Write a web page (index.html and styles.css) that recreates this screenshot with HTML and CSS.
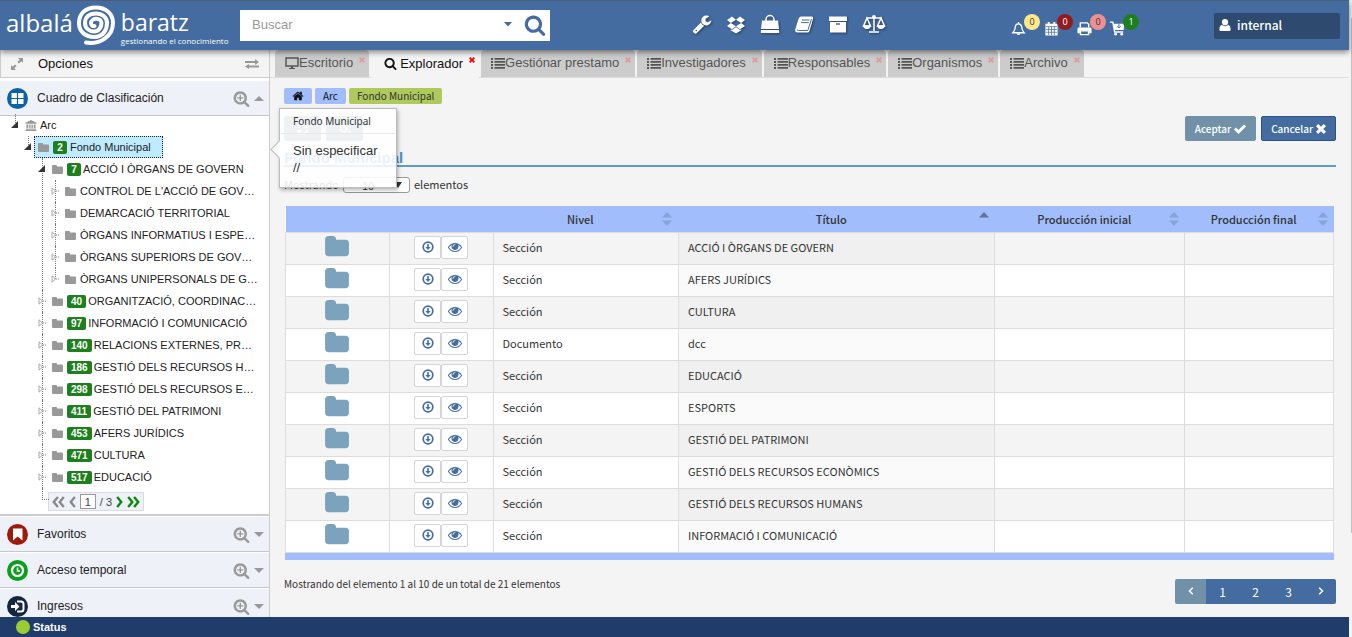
FILE: index.html
```html
<!DOCTYPE html>
<html lang="es">
<head>
<meta charset="utf-8">
<title>albalá baratz - Explorador</title>
<link rel="stylesheet" href="styles.css">
</head>
<body>
<svg class="defs" aria-hidden="true">
  <symbol id="folder" viewBox="0 128 1792 1536"><path d="M1728 608v704q0 92-66 158t-158 66h-1216q-92 0-158-66t-66-158v-960q0-92 66-158t158-66h320q92 0 158 66t66 158v32h672q92 0 158 66t66 158z"/></symbol>
  <symbol id="folder-sm" viewBox="0 0 12 10"><path d="M0 1.2Q0 .4 .8 .4H4.2Q5 .4 5 1.2V2H10.200Q11 2 11 2.800V8.600Q11 9.400 10.200 9.400H.8Q0 9.400 0 8.600Z"/></symbol>
  <symbol id="search" viewBox="0 0 1792 1792"><path d="M1216 832q0-185-131.500-316.500t-316.500-131.500-316.500 131.500-131.500 316.500 131.500 316.500 316.500 131.500 316.500-131.500 131.500-316.500zm512 832q0 52-38 90t-90 38q-54 0-90-38l-343-342q-179 124-399 124-143 0-273.500-55.500t-225-150-150-225-55.500-273.500 55.500-273.500 150-225 225-150 273.500-55.500 273.500 55.500 225 150 150 225 55.500 273.500q0 220-124 399l343 343q37 37 37 90z"/></symbol>
  <symbol id="search-plus" viewBox="0 0 1792 1792"><use href="#search"/><path d="M1088 760v144h-248v248h-144v-248h-248v-144h248v-248h144v248z"/></symbol>
  <symbol id="eye" viewBox="0 0 1792 1792"><path d="M1664 960q-152-236-381-353 61 104 61 225 0 185-131.500 316.500t-316.500 131.500-316.500-131.500-131.500-316.500q0-121 61-225-229 117-381 353 133 205 333.500 326.500t434.500 121.500 434.500-121.500 333.500-326.500zm-720-384q0-20-14-34t-34-14q-125 0-214.500 89.500t-89.500 214.500q0 20 14 34t34 14 34-14 14-34q0-86 61-147t147-61q20 0 34-14t14-34zm848 384q0 34-20 69-140 230-376.500 368.500t-499.500 138.500-499.500-139-376.500-368q-20-35-20-69t20-69q140-229 376.500-368t499.500-139 499.500 139 376.500 368q20 35 20 69z"/></symbol>
  <symbol id="down" viewBox="0 0 12 12"><circle cx="6" cy="6" r="4.800" fill="none" stroke="currentColor" stroke-width="1.700"/><path d="M5.200 3H6.800V6H8.600L6 8.900 3.400 6H5.200Z"/></symbol>
  <symbol id="home" viewBox="0 128 1792 1536"><path d="M1472 992v480q0 26-19 45t-45 19h-384v-384h-256v384h-384q-26 0-45-19t-19-45v-480q0-1 .5-3t.5-3l575-474 575 474q1 2 1 6zm223-69l-62 74q-8 9-21 11h-3q-13 0-21-7l-692-577-692 577q-12 8-24 7-13-2-21-11l-62-74q-8-10-7-23.500t11-21.500l719-599q32-26 76-26t76 26l244 204v-195q0-14 9-23t23-9h192q14 0 23 9t9 23v408l219 182q10 8 11 21.500t-7 23.500z"/></symbol>
  <symbol id="list" viewBox="0 0 14 12"><path d="M0 1h2v2H0zM0 4h2v2H0zM0 7h2v2H0zM0 10h2v2H0zM3.500 1H14v1.800H3.500zM3.500 4H14v1.800H3.500zM3.500 7H14v1.800H3.500zM3.500 10H14v1.800H3.500z"/></symbol>
  <symbol id="x" viewBox="0 0 10 10"><path d="M0 2.200 2.200 0 5 2.800 7.800 0 10 2.200 7.200 5 10 7.800 7.800 10 5 7.200 2.200 10 0 7.800 2.800 5Z"/></symbol>
  <symbol id="sort" viewBox="0 0 10 14"><path d="M5 0 10 5.500H0ZM5 14 0 8.500H10Z"/></symbol>
  <symbol id="opened" viewBox="0 0 8 8"><path d="M7 0V7H0Z"/></symbol>
  <symbol id="closed" viewBox="0 0 8 8"><path d="M1 .8 4.500 4 1 7.200Z" fill="#fff" stroke="#aaa"/><path d="M5 4h3" stroke="#888" stroke-dasharray="1 1"/></symbol>
</svg>

<header class="topbar">
  <a class="logo" href="#" aria-label="albalá baratz">
    <span class="logo-word">albalá</span>
    <svg class="logo-mark" viewBox="0 0 40 40"><path d="M10 37.500C23 40 37 32 37 18C37 8 29 2.500 20 2.500C9 2.500 3 9 3 18C3 27 10 32 18 32C27 32 31 25 31 18C31 12 26 8.500 20 8.500C13 8.500 9 12 9 18C9 23 13 26.500 18 26.500C23 26.500 25.500 22 25.500 18C25.500 15.500 23 13.800 20 13.800C17 13.800 15 16 15 18C15 20 16.500 21.500 18.500 21" fill="none" stroke="#fff" stroke-width="4" stroke-linecap="round"/></svg>
    <span class="logo-side"><span class="logo-word">baratz</span><span class="tagline">gestionando el conocimiento</span></span>
  </a>
  <form class="search">
    <input type="text" placeholder="Buscar" aria-label="Buscar">
    <button type="button" class="plain" aria-label="Opciones de búsqueda"><svg class="caret" viewBox="0 0 8 5"><path d="M0 0H8L4 4.500Z"/></svg></button>
    <button type="button" class="plain" aria-label="Buscar"><svg class="i22"><use href="#search"/></svg></button>
  </form>
  <nav class="tools" aria-label="Herramientas">
    <a href="#" aria-label="Ajustes"><svg viewBox="0 0 1792 1792"><path d="M448 1472q0-26-19-45t-45-19-45 19-19 45 19 45 45 19 45-19 19-45zm644-420l-682 682q-37 37-90 37-52 0-91-37l-106-108q-38-36-38-90 0-53 38-91l681-681q39 98 114.500 173.500t173.500 114.500zm634-435q0 39-23 106-47 134-164.500 217.500t-258.500 83.500q-185 0-316.500-131.500t-131.500-316.500 131.500-316.500 316.500-131.500q58 0 121.500 16.500t107.500 46.500q16 11 16 28t-16 28l-293 169v224l193 107q5-3 79-48.500t135.500-81 70.500-35.500q15 0 23.500 10t8.500 25z"/></svg></a>
    <a href="#" aria-label="Depósito"><svg viewBox="0 0 20 20"><path d="M6 2.500 10 5.800 4.800 9 1 6ZM14 2.500 19 6 15.200 9 10 5.800ZM1 12 4.800 9 10 12.200 6 15.200ZM19 12 15.200 9 10 12.200 14 15.200ZM10 13 14 16 15.300 15.300V16.300L10 19.500 4.700 16.300V15.300L6 16Z"/></svg></a>
    <a href="#" aria-label="Préstamos"><svg viewBox="0 0 20 20"><path d="M6 9V5.500a4 4 0 0 1 8 0V9" fill="none" stroke="#fff" stroke-width="1.500"/><path d="M2 6.500H18L19 15H1ZM1 16H19L19.200 19H.8Z"/></svg></a>
    <a href="#" aria-label="Publicaciones"><svg viewBox="0 0 20 20"><path d="M7 2.500H18Q19.500 3 19 5L15.500 17Q15 18.500 13.500 18.500H3Q.5 18 1.300 15L4.500 5Q5.200 2.500 7 2.500Z"/><path d="M8 6H15.500M7.200 8.600H14.700M3 15.500Q3 16.500 4.500 16.500H13.800L17.500 5" fill="none" stroke="#446ca0"/></svg></a>
    <a href="#" aria-label="Archivo"><svg viewBox="0 0 20 20"><path d="M1 2.500H19V7H1ZM2 8H18V18.500H2Z"/><path d="M8 10H12" stroke="#446ca0" stroke-width="1.500"/></svg></a>
    <a href="#" aria-label="Comparar"><svg class="wide" viewBox="0 0 24 20"><path d="M4 4H20M12 2V17M7 18H17M5 4 1.500 12H8.500ZM19 4 15.500 12H22.500Z" fill="none" stroke="#fff" stroke-width="1.500"/><path d="M1 11.500H9Q8.500 15 5 15T1 11.500ZM15 11.500H23Q22.500 15 19 15T15 11.500Z"/><circle cx="12" cy="3" r="2"/></svg></a>
  </nav>
  <nav class="alerts" aria-label="Avisos">
    <a href="#" aria-label="Notificaciones"><svg viewBox="0 0 16 16"><path d="M2 12.500Q4.500 10 4.500 6.500Q5 3 8 3T11.500 6.500Q11.500 10 14 12.500Z" fill="none" stroke="#fff" stroke-width="1.400"/><path d="M7.200 1h1.600v2H7.200zM6 13H10Q9.500 15 8 15T6 13Z"/></svg><span class="count yellow">0</span></a>
    <a href="#" aria-label="Calendario"><svg viewBox="0 0 16 16"><path d="M1.500 3h13v12.500h-13zM4 1h2v3H4zM10 1h2v3h-2z"/><path d="M2 6h12M2 9h12M2 12h12M5 6v9M8 6v9M11 6v9" stroke="#446ca0" stroke-width=".8"/></svg><span class="count red">0</span></a>
    <a href="#" aria-label="Impresiones"><svg viewBox="0 0 16 16"><path d="M3.500 7V2H11L12.500 3.500V7" fill="none" stroke="#fff" stroke-width="1.500"/><path d="M2 7H14Q15.500 7 15.500 8.500V13H13V10.500H3V13H.5V8.500Q.5 7 2 7Z"/><path d="M3.700 10.500h8.600v4H3.700z" fill="none" stroke="#fff" stroke-width="1.500"/></svg><span class="count pink">0</span></a>
    <a href="#" aria-label="Cesta"><svg viewBox="0 0 16 16"><path d="M0 1.200H3L5 11.800H14" fill="none" stroke="#fff" stroke-width="1.500"/><path d="M3.500 3H15.500L14.500 9.500H5Z"/><circle cx="6" cy="14" r="1.500"/><circle cx="12.500" cy="14" r="1.500"/><path d="M9.500 3V7M7.500 5.500 9.500 7.500 11.500 5.500" fill="none" stroke="#446ca0"/></svg><span class="count green">1</span></a>
  </nav>
  <button type="button" class="user"><svg viewBox="0 0 12 12"><circle cx="6" cy="3.200" r="3.100"/><path d="M2.500 5.800Q6 8.500 9.500 5.800Q11.700 7 11.700 10.500Q11.500 12 10 12H2Q.5 12 .3 10.500Q.3 7 2.500 5.800Z"/></svg>internal</button>
</header>

<div class="main">
  <aside class="sidebar">
    <div class="options">
      <svg class="i12" viewBox="0 0 12 12"><path d="M7 0H12V5L10.300 3.300 8 5.600 6.400 4 8.700 1.700ZM5 12H0V7L1.700 8.700 4 6.400 5.600 8 3.300 10.300Z"/></svg>
      <span class="grow">Opciones</span>
      <svg class="swap" viewBox="0 0 14 10"><path d="M0 2H10V0L14 3 10 6V4H0ZM14 6.500H4V5L0 7.500 4 10V8.500H14Z"/></svg>
    </div>
    <div class="section">
      <svg class="disc" viewBox="0 0 21 21"><circle cx="10.500" cy="10.500" r="10.500" fill="#0b62a8"/><path d="M4.500 5h12v11h-12z" fill="#fff"/><path d="M10.500 5v11M4 10.500h13" stroke="#0b62a8" stroke-width="1.200"/></svg>
      <span class="grow">Cuadro de Clasificación</span>
      <svg class="i17"><use href="#search-plus"/></svg><svg class="tri" viewBox="0 0 10 5"><path d="M0 5 5 0 10 5Z"/></svg>
    </div>
    <ul class="tree">
      <li><div class="row"><svg class="exp"><use href="#opened"/></svg><a href="#"><svg class="ic" viewBox="0 0 12 12"><path d="M6 0 12 3V4H0V3ZM1 5H3V9H1ZM4 5H5.500V9H4ZM6.500 5H8V9H6.500ZM9 5H11V9H9ZM.5 9.500h11v1H.5zM0 11h12v1H0z"/></svg>Arc</a></div>
        <ul>
          <li><div class="row"><svg class="exp"><use href="#opened"/></svg><a href="#" class="selected"><svg class="ic"><use href="#folder-sm"/></svg><b>2</b>Fondo Municipal</a></div>
            <ul>
              <li><div class="row"><svg class="exp"><use href="#opened"/></svg><a href="#"><svg class="ic"><use href="#folder-sm"/></svg><b>7</b>ACCIÓ I ÒRGANS DE GOVERN</a></div>
                <ul>
                  <li><div class="row"><svg class="exp"><use href="#closed"/></svg><a href="#"><svg class="ic"><use href="#folder-sm"/></svg>CONTROL DE L'ACCIÓ DE GOV…</a></div></li>
                  <li><div class="row"><svg class="exp"><use href="#closed"/></svg><a href="#"><svg class="ic"><use href="#folder-sm"/></svg>DEMARCACIÓ TERRITORIAL</a></div></li>
                  <li><div class="row"><svg class="exp"><use href="#closed"/></svg><a href="#"><svg class="ic"><use href="#folder-sm"/></svg>ÒRGANS INFORMATIUS I ESPE…</a></div></li>
                  <li><div class="row"><svg class="exp"><use href="#closed"/></svg><a href="#"><svg class="ic"><use href="#folder-sm"/></svg>ÒRGANS SUPERIORS DE GOV…</a></div></li>
                  <li><div class="row"><svg class="exp"><use href="#closed"/></svg><a href="#"><svg class="ic"><use href="#folder-sm"/></svg>ÒRGANS UNIPERSONALS DE G…</a></div></li>
                </ul>
              </li>
              <li><div class="row"><svg class="exp"><use href="#closed"/></svg><a href="#"><svg class="ic"><use href="#folder-sm"/></svg><b>40</b>ORGANITZACIÓ, COORDINAC…</a></div></li>
              <li><div class="row"><svg class="exp"><use href="#closed"/></svg><a href="#"><svg class="ic"><use href="#folder-sm"/></svg><b>97</b>INFORMACIÓ I COMUNICACIÓ</a></div></li>
              <li><div class="row"><svg class="exp"><use href="#closed"/></svg><a href="#"><svg class="ic"><use href="#folder-sm"/></svg><b>140</b>RELACIONS EXTERNES, PR…</a></div></li>
              <li><div class="row"><svg class="exp"><use href="#closed"/></svg><a href="#"><svg class="ic"><use href="#folder-sm"/></svg><b>186</b>GESTIÓ DELS RECURSOS H…</a></div></li>
              <li><div class="row"><svg class="exp"><use href="#closed"/></svg><a href="#"><svg class="ic"><use href="#folder-sm"/></svg><b>298</b>GESTIÓ DELS RECURSOS E…</a></div></li>
              <li><div class="row"><svg class="exp"><use href="#closed"/></svg><a href="#"><svg class="ic"><use href="#folder-sm"/></svg><b>411</b>GESTIÓ DEL PATRIMONI</a></div></li>
              <li><div class="row"><svg class="exp"><use href="#closed"/></svg><a href="#"><svg class="ic"><use href="#folder-sm"/></svg><b>453</b>AFERS JURÍDICS</a></div></li>
              <li><div class="row"><svg class="exp"><use href="#closed"/></svg><a href="#"><svg class="ic"><use href="#folder-sm"/></svg><b>471</b>CULTURA</a></div></li>
              <li><div class="row"><svg class="exp"><use href="#closed"/></svg><a href="#"><svg class="ic"><use href="#folder-sm"/></svg><b>517</b>EDUCACIÓ</a></div></li>
              <li class="pager-item"><div class="tree-pager">
                <button type="button" class="plain" aria-label="Primera"><svg class="i11" viewBox="0 0 11 10"><path d="M5 .8 1.500 5 5 9.200M10 .8 6.500 5 10 9.200"/></svg></button>
                <button type="button" class="plain" aria-label="Anterior"><svg class="i6" viewBox="0 0 6 10"><path d="M5 .8 1.500 5 5 9.200"/></svg></button>
                <input type="text" value="1" aria-label="Página"><span>/ 3</span>
                <button type="button" class="plain go" aria-label="Siguiente"><svg class="i6" viewBox="0 0 6 10"><path d="M1 .8 4.500 5 1 9.200"/></svg></button>
                <button type="button" class="plain go" aria-label="Última"><svg class="i11" viewBox="0 0 11 10"><path d="M1 .8 4.500 5 1 9.200M6 .8 9.500 5 6 9.200"/></svg></button>
              </div></li>
            </ul>
          </li>
        </ul>
      </li>
    </ul>
    <div class="section">
      <svg class="disc" viewBox="0 0 21 21"><circle cx="10.500" cy="10.500" r="10.500" fill="#9c1b0c"/><path d="M6 4.500H15.500V16.500L10.700 12.500 6 16.500Z" fill="#fff"/></svg>
      <span class="grow">Favoritos</span>
      <svg class="i17"><use href="#search-plus"/></svg><svg class="tri" viewBox="0 0 10 5"><path d="M0 0 5 5 10 0Z"/></svg>
    </div>
    <div class="section">
      <svg class="disc" viewBox="0 0 21 21"><circle cx="10.500" cy="10.500" r="10.500" fill="#0aa01e"/><circle cx="10.500" cy="10.500" r="5.500" fill="none" stroke="#fff" stroke-width="2.200"/><path d="M10.500 7.500V11H13" fill="none" stroke="#fff" stroke-width="1.500"/></svg>
      <span class="grow">Acceso temporal</span>
      <svg class="i17"><use href="#search-plus"/></svg><svg class="tri" viewBox="0 0 10 5"><path d="M0 0 5 5 10 0Z"/></svg>
    </div>
    <div class="section">
      <svg class="disc" viewBox="0 0 21 21"><circle cx="10.500" cy="10.500" r="10.500" fill="#14273f"/><path d="M10 5.500H14Q16.500 5.500 16.500 8V13Q16.500 15.500 14 15.500H10" fill="none" stroke="#fff" stroke-width="2"/><path d="M4 9H8V6L12.500 10.500 8 15V12H4Z" fill="#fff"/></svg>
      <span class="grow">Ingresos</span>
      <svg class="i17"><use href="#search-plus"/></svg><svg class="tri" viewBox="0 0 10 5"><path d="M0 0 5 5 10 0Z"/></svg>
    </div>
  </aside>

  <main class="content">
    <nav class="tabs">
      <a href="#"><svg class="monitor" viewBox="0 0 14 12"><path d="M1 1h12v8H1z" fill="none" stroke="currentColor" stroke-width="1.500"/><path d="M6 9h2v2h2v1H4v-1h2z"/></svg>Escritorio<svg class="close"><use href="#x"/></svg></a>
      <a href="#" class="active"><svg class="i13"><use href="#search"/></svg>Explorador<svg class="close"><use href="#x"/></svg></a>
      <a href="#"><svg class="list"><use href="#list"/></svg>Gestiónar prestamo<svg class="close"><use href="#x"/></svg></a>
      <a href="#"><svg class="list"><use href="#list"/></svg>Investigadores<svg class="close"><use href="#x"/></svg></a>
      <a href="#"><svg class="list"><use href="#list"/></svg>Responsables<svg class="close"><use href="#x"/></svg></a>
      <a href="#"><svg class="list"><use href="#list"/></svg>Organismos<svg class="close"><use href="#x"/></svg></a>
      <a href="#"><svg class="list"><use href="#list"/></svg>Archivo<svg class="close"><use href="#x"/></svg></a>
    </nav>

    <div class="panel">
      <nav class="crumbs"><a href="#" aria-label="Inicio"><svg class="i12"><use href="#home"/></svg></a><a href="#">Arc</a><a href="#" class="current">Fondo Municipal</a></nav>
      <div class="toolbar">
        <button type="button" class="tool" aria-label="Actualizar"><svg class="i12" viewBox="0 0 12 12"><path d="M1.500 5A4.600 4.600 0 0 1 9.500 3M10.500 7A4.600 4.600 0 0 1 2.500 9" fill="none" stroke="currentColor" stroke-width="1.800"/><path d="M11.500 .5V5H7ZM.5 11.500V7H5Z"/></svg></button>
        <button type="button" class="tool" aria-label="Configurar"><svg class="i12" viewBox="0 0 12 12"><circle cx="4.500" cy="6" r="3" fill="none" stroke="currentColor" stroke-width="2" stroke-dasharray="1.800 .6"/><circle cx="10" cy="2.500" r="1.300" fill="none" stroke="currentColor"/><circle cx="10" cy="9.500" r="1.300" fill="none" stroke="currentColor"/></svg></button>
        <button type="button" class="accept">Aceptar <svg class="i12" viewBox="0 0 12 12"><path d="M0 6.500 2 4.500 4.500 7 10 1.500 12 3.500 4.500 11Z"/></svg></button>
        <button type="button" class="cancel">Cancelar <svg class="i10"><use href="#x"/></svg></button>
      </div>
      <h2>Fondo Municipal</h2>
      <div class="length"><label for="len">Mostrando</label><span class="pick"><select id="len"><option>10</option></select><svg viewBox="0 0 8 6"><path d="M0 0H8L4 6Z"/></svg></span><span>elementos</span></div>

      <div class="grid">
      <table>
        <colgroup><col class="c1"><col class="c1"><col class="c2"><col class="c3"><col class="c4"><col class="c5"></colgroup>
        <thead><tr><th></th><th></th>
          <th><div class="head"><span>Nivel</span><svg class="sort"><use href="#sort"/></svg></div></th>
          <th><div class="head"><span>Título</span><svg class="sort on" viewBox="0 0 10 14"><path d="M5 0 10 5.500H0Z"/></svg></div></th>
          <th><div class="head"><span>Producción inicial</span><svg class="sort"><use href="#sort"/></svg></div></th>
          <th><div class="head"><span>Producción final</span><svg class="sort"><use href="#sort"/></svg></div></th></tr></thead>
        <tbody>
          <tr><td><svg class="big"><use href="#folder"/></svg></td><td><div class="pair"><button type="button" aria-label="Abrir"><svg class="i12"><use href="#down"/></svg></button><button type="button" aria-label="Ver"><svg class="i14"><use href="#eye"/></svg></button></div></td><td>Sección</td><td>ACCIÓ I ÒRGANS DE GOVERN</td><td></td><td></td></tr>
          <tr><td><svg class="big"><use href="#folder"/></svg></td><td><div class="pair"><button type="button" aria-label="Abrir"><svg class="i12"><use href="#down"/></svg></button><button type="button" aria-label="Ver"><svg class="i14"><use href="#eye"/></svg></button></div></td><td>Sección</td><td>AFERS JURÍDICS</td><td></td><td></td></tr>
          <tr><td><svg class="big"><use href="#folder"/></svg></td><td><div class="pair"><button type="button" aria-label="Abrir"><svg class="i12"><use href="#down"/></svg></button><button type="button" aria-label="Ver"><svg class="i14"><use href="#eye"/></svg></button></div></td><td>Sección</td><td>CULTURA</td><td></td><td></td></tr>
          <tr><td><svg class="big"><use href="#folder"/></svg></td><td><div class="pair"><button type="button" aria-label="Abrir"><svg class="i12"><use href="#down"/></svg></button><button type="button" aria-label="Ver"><svg class="i14"><use href="#eye"/></svg></button></div></td><td>Documento</td><td>dcc</td><td></td><td></td></tr>
          <tr><td><svg class="big"><use href="#folder"/></svg></td><td><div class="pair"><button type="button" aria-label="Abrir"><svg class="i12"><use href="#down"/></svg></button><button type="button" aria-label="Ver"><svg class="i14"><use href="#eye"/></svg></button></div></td><td>Sección</td><td>EDUCACIÓ</td><td></td><td></td></tr>
          <tr><td><svg class="big"><use href="#folder"/></svg></td><td><div class="pair"><button type="button" aria-label="Abrir"><svg class="i12"><use href="#down"/></svg></button><button type="button" aria-label="Ver"><svg class="i14"><use href="#eye"/></svg></button></div></td><td>Sección</td><td>ESPORTS</td><td></td><td></td></tr>
          <tr><td><svg class="big"><use href="#folder"/></svg></td><td><div class="pair"><button type="button" aria-label="Abrir"><svg class="i12"><use href="#down"/></svg></button><button type="button" aria-label="Ver"><svg class="i14"><use href="#eye"/></svg></button></div></td><td>Sección</td><td>GESTIÓ DEL PATRIMONI</td><td></td><td></td></tr>
          <tr><td><svg class="big"><use href="#folder"/></svg></td><td><div class="pair"><button type="button" aria-label="Abrir"><svg class="i12"><use href="#down"/></svg></button><button type="button" aria-label="Ver"><svg class="i14"><use href="#eye"/></svg></button></div></td><td>Sección</td><td>GESTIÓ DELS RECURSOS ECONÒMICS</td><td></td><td></td></tr>
          <tr><td><svg class="big"><use href="#folder"/></svg></td><td><div class="pair"><button type="button" aria-label="Abrir"><svg class="i12"><use href="#down"/></svg></button><button type="button" aria-label="Ver"><svg class="i14"><use href="#eye"/></svg></button></div></td><td>Sección</td><td>GESTIÓ DELS RECURSOS HUMANS</td><td></td><td></td></tr>
          <tr><td><svg class="big"><use href="#folder"/></svg></td><td><div class="pair"><button type="button" aria-label="Abrir"><svg class="i12"><use href="#down"/></svg></button><button type="button" aria-label="Ver"><svg class="i14"><use href="#eye"/></svg></button></div></td><td>Sección</td><td>INFORMACIÓ I COMUNICACIÓ</td><td></td><td></td></tr>
        </tbody>
      </table>
      </div>
      <div class="below">
        <span>Mostrando del elemento 1 al 10 de un total de 21 elementos</span>
        <nav class="pages" aria-label="Páginas">
          <button type="button" class="off" aria-label="Anterior"><svg class="i6" viewBox="0 0 6 10"><path d="M4.800 1.800 1.500 5 4.800 8.200"/></svg></button><button type="button">1</button><button type="button">2</button><button type="button">3</button><button type="button" class="next" aria-label="Siguiente"><svg class="i6" viewBox="0 0 6 10"><path d="M1.200 1.800 4.500 5 1.200 8.200"/></svg></button>
        </nav>
      </div>
      <div class="popover" role="tooltip"><h3>Fondo Municipal</h3><p>Sin especificar<br>//</p></div>
    </div>
  </main>
</div>
<footer class="status"><i></i>Status</footer>
<div class="gutter"></div>
</body>
</html>
```
FILE: styles.css
```css
* { box-sizing: border-box; }
body {
  margin: 0;
  height: 100vh;
  display: grid;
  grid-template: 50px minmax(0, 1fr) 20px / minmax(0, 1fr) 3px;
  overflow: hidden;
  font-family: "Liberation Sans", Arial, sans-serif;
  font-size: 12px;
  color: #333;
  background: #f4f4f4;
}
a { color: inherit; text-decoration: none; }
svg { display: block; flex: none; fill: currentColor; }
button, input, select { font: inherit; color: inherit; }
button { padding: 0; cursor: pointer; }
.defs { position: absolute; width: 0; height: 0; }
.plain { border: 0; background: none; display: flex; }
.grow { flex: 1; }
.i6 { width: 6px; height: 10px; }
.i10 { width: 10px; height: 10px; }
.i11 { width: 11px; height: 10px; }
.i12 { width: 12px; height: 12px; }
.i13 { width: 13px; height: 13px; }
.i14 { width: 14px; height: 14px; }
.i17 { width: 17px; height: 17px; }
.i22 { width: 22px; height: 22px; }

/* Top bar */
.topbar {
  position: relative;
  z-index: 5;
  display: flex;
  align-items: center;
  padding-right: 9px;
  background: #446ca0;
  border-top: 1px solid #4d5f78;
  box-shadow: 0 2px 6px rgba(0, 0, 0, .5);
  color: #fff;
}
.logo { width: 240px; height: 100%; padding: 8px 0 0 6px; display: flex; align-items: flex-start; font-family: "Open Sans", sans-serif; }
.logo-word { display: block; font-size: 24px; line-height: 27px; }
.logo-mark { width: 40px; height: 40px; margin: -4px 5px 0 3px; }
.logo-side .logo-word { font-size: 23px; }
.tagline { display: block; font-size: 8px; line-height: 10px; white-space: nowrap; }
.search { width: 310px; height: 31px; padding: 0 4px 2px 12px; display: flex; align-items: center; gap: 12px; background: #fff; color: #446ca0; }
.search input { flex: 1; min-width: 0; padding: 0; border: 0; outline: 0; background: none; font-size: 13px; color: #555; }
.search input::placeholder { color: #999; opacity: 1; }
.caret { width: 8px; height: 5px; }
.tools { display: flex; gap: 14px; margin-left: 142px; padding-bottom: 3px; }
.tools svg { width: 20px; height: 20px; filter: drop-shadow(1px 1px 1px rgba(0, 0, 0, .4)); }
.tools .wide { width: 24px; }
.alerts { display: flex; margin-left: auto; }
.alerts a { position: relative; width: 33px; height: 26px; padding-top: 8px; }
.alerts svg { width: 15px; height: 15px; }
.count { position: absolute; left: 13px; top: 1px; width: 16px; height: 16px; border-radius: 50%; font: 9px/15px "Open Sans", sans-serif; text-align: center; }
.yellow { background: #fbe98b; color: #333; }
.red { background: #911c20; }
.pink { background: #ec9092; color: #333; }
.green { background: #1d8020; }
.user { width: 126px; height: 26px; margin-left: 71px; padding: 0 0 2px 5px; display: flex; align-items: center; gap: 6px; border: 0; border-radius: 2px; background: #2e4b6f; color: #fff; font: 500 12px/24px "Noto Sans CJK SC", sans-serif; }
.user svg { width: 12px; height: 12px; }

/* Side panel */
.main { display: flex; min-height: 0; }
.sidebar { flex: none; width: 270px; overflow: hidden; border-right: 1px solid #ccc; background: #fff; }
.options { height: 28px; margin-bottom: 2px; padding: 0 10px 0 10px; display: flex; align-items: center; gap: 15px; border-left: 1px solid #ccc; border-bottom: 1px solid #ccc; background: #f4f4f4; font-size: 13px; color: #111; }
.options svg { color: #999; }
.swap { width: 14px; height: 10px; }
.section { height: 36px; padding: 0 5px 0 7px; display: flex; align-items: center; border-top: 1px solid #fff; border-bottom: 1px solid #c4c6ca; background: #eef1f7; color: #222; }
.section .grow { padding-left: 9px; }
.section .i17, .tri { color: #999; }
.disc { width: 21px; height: 21px; }
.tri { width: 10px; height: 5px; margin-left: 4px; }

/* Tree */
.tree, .tree ul { list-style: none; margin: 0; padding: 0; }
.tree { margin-top: -2px; padding: 0 0 3px 15px; font-size: 11px; color: #222; border-bottom: 2px solid #ccc; }
.tree ul { margin-left: 13px; }
.tree ul ul { margin-left: 14px; }
.tree ul ul ul { margin-left: 13px; }
.tree li { position: relative; }
.tree li::before { content: ""; position: absolute; left: 0; top: 0; bottom: 0; border-left: 1px dotted #777; }
.tree li:last-child::before { bottom: auto; height: 11px; }
.row { position: relative; display: flex; align-items: center; height: 22px; margin-left: -4px; }
.exp { width: 8px; height: 8px; color: #333; }
.row a { display: flex; align-items: center; height: 22px; margin-left: 2px; padding: 0 3px; border: 1px solid transparent; white-space: nowrap; }
.row .selected { padding-right: 11px; background: #beebff; border: 1px dotted #222; }
.row b { min-width: 14px; height: 13px; margin-right: 2px; padding: 0 4px; border-radius: 2px; background: #1d7f1d; color: #fff; font-size: 10px; line-height: 13px; text-align: center; }
.selected b { margin-right: 3px; }
.ic { width: 12px; height: 11px; margin-right: 3px; color: #999; }
.tree .pager-item { padding: 4px 0 0 6px; }
.tree .pager-item::before { height: 14px; width: 6px; border-bottom: 1px dotted #777; }
.tree-pager { width: 96px; height: 19px; padding: 0 3px; display: flex; align-items: center; justify-content: space-between; border: 1px solid #d8dce2; background: #eef1f7; color: #888; }
.tree-pager svg { height: 12px; }
.tree-pager .i6 { width: 7px; }
.tree-pager .i11 { width: 13px; }
.tree-pager path { fill: none; stroke: currentColor; stroke-width: 2; }
.tree-pager input { width: 16px; height: 15px; padding: 0; border: 1px solid #999; background: #fff; text-align: center; color: #444; }
.tree-pager span { color: #444; }
.tree-pager .go { color: #078a07; }

/* Tabs */
.content { flex: 1; min-width: 0; overflow: hidden; font-family: "Noto Sans CJK SC", "Noto Sans", sans-serif; }
.tabs { height: 28px; padding-left: 5px; display: flex; gap: 2px; border-bottom: 1px solid #ddd; font: 13px/25px "Liberation Sans", Arial, sans-serif; color: #555; }
.tabs a { height: 27px; padding: 0 4px 2px 10px; display: flex; align-items: center; border-radius: 4px 4px 0 0; background: #ccc; }
.tabs .active { height: 28px; padding-left: 13px; background: #f4f4f4; color: #111; }
.tabs .active .i13 { margin-right: 3px; }
.monitor, .list { width: 14px; height: 12px; }
.close { width: 6px; height: 6px; margin: 0 0 6px 6px; color: #e39a9a; }
.active .close { color: #f00; }

/* Page body */
.panel { position: relative; padding: 10px 13px 0 14px; }
.crumbs { display: flex; gap: 3px; font-size: 10px; line-height: 16px; color: #111; }
.crumbs a { height: 16px; padding: 0 8px; display: flex; align-items: center; border-radius: 2px; background: #a1bdfb; }
.crumbs .current { background: #aec95c; color: #333; }
.toolbar { display: flex; gap: 5px; margin-top: 12px; color: #fff; font-size: 10px; font-weight: 500; }
.toolbar button { height: 25px; padding: 0 9px; display: flex; align-items: center; gap: 3px; border: 1px solid #7191a9; border-radius: 2px; background: #7191a9; color: #fff; }
.toolbar .tool { width: 37px; justify-content: center; }
.toolbar .accept { margin-left: auto; }
.toolbar .cancel { background: #446ca0; border-color: #2c5289; }
.panel h2 { margin: 10px 0 0; border-bottom: 2px solid #5c9dca; font: bold 15px/14px "Liberation Sans", Arial, sans-serif; color: #4a90c4; }
.length { display: flex; align-items: center; gap: 4px; height: 17px; margin: 9px 0 13px; font-size: 11px; line-height: 17px; }
.pick { display: grid; align-items: center; }
.pick select { grid-area: 1 / 1; appearance: none; width: 67px; height: 16px; padding: 0 0 0 18px; border: 1px solid #999; border-radius: 3px; background: #fff; line-height: 14px; }
.pick svg { grid-area: 1 / 1; justify-self: end; width: 8px; height: 6px; margin-right: 8px; }
.grid { margin: 0 2px 0 1px; border-bottom: 7px solid #a1bdfb; }
table { width: 100%; table-layout: fixed; border-collapse: collapse; font-size: 11px; line-height: 18px; background: #fff; }
.c1 { width: 9.900%; }
.c2 { width: 17.700%; }
.c3 { width: 30.200%; }
.c4 { width: 18.100%; }
.c5 { width: 14.200%; }
th { height: 26px; padding: 0 6px 0 5px; background: #a1bdfb; font-weight: 500; }
.head { display: flex; align-items: center; }
.head span { flex: 1; }
.sort { width: 10px; height: 14px; color: #8aa2d5; }
.sort.on { color: #637499; }
td { height: 32px; padding: 0 9px 2px; border: 1px solid #ddd; }
tbody tr:nth-child(odd) { background: #f4f4f4; }
td:nth-child(4) { background: #fafafa; }
tr:nth-child(odd) td:nth-child(4) { background: #f0f0f0; }
.big { width: 26px; height: 22px; margin: 0 auto; color: #7da2bd; }
.pair { display: flex; justify-content: center; }
.pair button { width: 27px; height: 23px; display: flex; align-items: center; justify-content: center; border: 1px solid #d5d5d5; border-radius: 2px; background: #fff; color: #446ca0; }
.below { display: flex; justify-content: space-between; margin-top: 19px; font-size: 10px; line-height: 10px; }
.pages { display: flex; border-radius: 2px; overflow: hidden; }
.pages button { width: 33px; height: 25px; display: flex; align-items: center; justify-content: center; border: 0; background: #446ca0; color: #fff; font-size: 12px; line-height: 25px; }
.pages .off { width: 31px; background: #7191a9; }
.pages .next { width: 31px; }
.pages path { fill: none; stroke: currentColor; stroke-width: 1.500; }

/* Node summary shown over the page body */
.popover { position: absolute; left: 9px; top: 30px; width: 118px; height: 80px; border: 1px solid #bbb; background: rgba(255, 255, 255, .88); box-shadow: 1px 2px 4px rgba(0, 0, 0, .3); font-family: "Liberation Sans", Arial, sans-serif; }
.popover::before { content: ""; position: absolute; left: -7px; top: 34px; width: 12px; height: 12px; border: solid #bbb; border-width: 0 0 1px 1px; background: #fff; transform: rotate(45deg); }
.popover h3 { position: relative; margin: 1px; padding: 0 12px; border-bottom: 1px solid #e8e8e8; font: 10px/23px "Noto Sans", sans-serif; white-space: nowrap; }
.popover p { position: relative; margin: 8px 13px; font-size: 13px; line-height: 17px; }

.status { display: flex; align-items: center; padding-left: 16px; gap: 3px; background: #1f3c6a; color: #fff; font-size: 11px; font-weight: bold; }
.status i { width: 14px; height: 14px; border-radius: 50%; background: #9acd32; }
.gutter { grid-area: 1 / 2 / 4 / 3; margin: 18px 0 104px 2px; background: #c1c1c1; }
```
